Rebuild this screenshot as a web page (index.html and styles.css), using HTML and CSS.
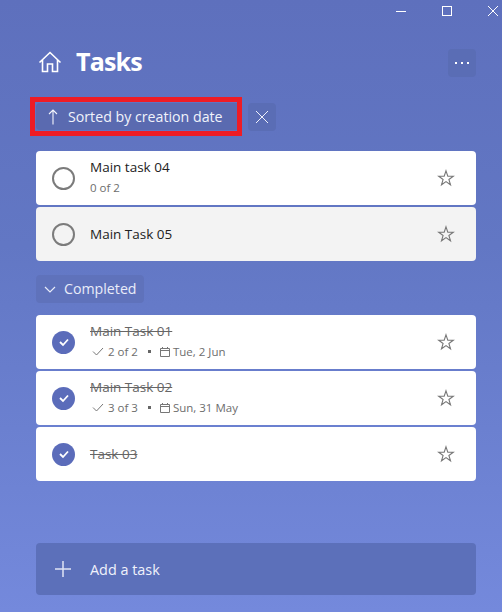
FILE: index.html
```html
<!DOCTYPE html>
<html lang="en">
<head>
<meta charset="utf-8">
<title>Tasks</title>
<link rel="stylesheet" href="styles.css">
</head>
<body>
<div class="app">
  <div class="titlebar">
    <svg class="win-icon" width="10" height="10" viewBox="0 0 10 10"><path d="M0 5.500H10"/></svg>
    <svg class="win-icon" width="10" height="10" viewBox="0 0 10 10"><rect x="0.5" y="0.5" width="9" height="9"/></svg>
    <svg class="win-icon" width="10" height="10" viewBox="0 0 10 10"><path d="M0 0L10 10M10 0L0 10"/></svg>
  </div>
  <header class="header">
    <svg class="home" width="24" height="22" viewBox="0 0 24 22"><path d="M1.500 11.500L12 1.500L22.500 11.500M4.500 9V20.500H9.500V13H14.500V20.500H19.500V9"/></svg>
    <h1 class="title">Tasks</h1>
    <button class="more"><svg width="14" height="2" viewBox="0 0 14 2"><path d="M0 0H2V2H0ZM6 0H8V2H6ZM12 0H14V2H12Z"/></svg></button>
  </header>
  <div class="sortbar">
    <div class="sort-outline">
      <div class="sort-chip">
        <svg class="arrow" width="10" height="16" viewBox="0 0 10 16"><path d="M5 15.500V1M1 5L5 1L9 5"/></svg>
        <span>Sorted by creation date</span>
      </div>
    </div>
    <button class="sort-close"><svg width="14" height="14" viewBox="0 0 14 14"><path d="M1 1L13 13M13 1L1 13"/></svg></button>
  </div>
  <ul class="list">
    <li class="task">
      <span class="circle"></span>
      <div class="body"><div class="name">Main task 04</div><div class="meta"><span>0 of 2</span></div></div>
      <svg class="star" width="18" height="18" viewBox="0 0 18 18"><path d="M9 1.800L10.800 7.200H16.300L11.900 10.500L13.500 15.800L9 12.600L4.500 15.800L6.100 10.500L1.700 7.200H7.200Z"/></svg>
    </li>
    <li class="task hover">
      <span class="circle"></span>
      <div class="body"><div class="name">Main Task 05</div></div>
      <svg class="star" width="18" height="18" viewBox="0 0 18 18"><path d="M9 1.800L10.800 7.200H16.300L11.900 10.500L13.500 15.800L9 12.600L4.500 15.800L6.100 10.500L1.700 7.200H7.200Z"/></svg>
    </li>
  </ul>
  <button class="completed">
    <svg width="12" height="7" viewBox="0 0 12 7"><path d="M1 1L6 6L11 1"/></svg>
    <span>Completed</span>
  </button>
  <ul class="list">
    <li class="task">
      <span class="check"><svg width="12" height="10" viewBox="0 0 12 10"><path d="M2 5L5 8L10 2.500"/></svg></span>
      <div class="body"><div class="name done">Main Task 01</div>
        <div class="meta">
          <svg class="tick" width="12" height="9" viewBox="0 0 12 9"><path d="M1 4.500L4.500 8L11 1"/></svg><span>2 of 2</span><i class="dot"></i>
          <svg class="cal" width="10" height="10" viewBox="0 0 10 10"><path d="M.5 1.500H9.500V9.500H.5ZM.5 3.500H9.500M2.500 0V2M7.500 0V2"/></svg><span>Tue, 2 Jun</span>
        </div></div>
      <svg class="star" width="18" height="18" viewBox="0 0 18 18"><path d="M9 1.800L10.800 7.200H16.300L11.900 10.500L13.500 15.800L9 12.600L4.500 15.800L6.100 10.500L1.700 7.200H7.200Z"/></svg>
    </li>
    <li class="task">
      <span class="check"><svg width="12" height="10" viewBox="0 0 12 10"><path d="M2 5L5 8L10 2.500"/></svg></span>
      <div class="body"><div class="name done">Main Task 02</div>
        <div class="meta">
          <svg class="tick" width="12" height="9" viewBox="0 0 12 9"><path d="M1 4.500L4.500 8L11 1"/></svg><span>3 of 3</span><i class="dot"></i>
          <svg class="cal" width="10" height="10" viewBox="0 0 10 10"><path d="M.5 1.500H9.500V9.500H.5ZM.5 3.500H9.500M2.500 0V2M7.500 0V2"/></svg><span>Sun, 31 May</span>
        </div></div>
      <svg class="star" width="18" height="18" viewBox="0 0 18 18"><path d="M9 1.800L10.800 7.200H16.300L11.900 10.500L13.500 15.800L9 12.600L4.500 15.800L6.100 10.500L1.700 7.200H7.200Z"/></svg>
    </li>
    <li class="task">
      <span class="check"><svg width="12" height="10" viewBox="0 0 12 10"><path d="M2 5L5 8L10 2.500"/></svg></span>
      <div class="body"><div class="name done">Task 03</div></div>
      <svg class="star" width="18" height="18" viewBox="0 0 18 18"><path d="M9 1.800L10.800 7.200H16.300L11.900 10.500L13.500 15.800L9 12.600L4.500 15.800L6.100 10.500L1.700 7.200H7.200Z"/></svg>
    </li>
  </ul>
  <div class="spacer"></div>
  <div class="add">
    <svg width="18" height="18" viewBox="0 0 18 18"><path d="M9 1V17M1 9H17"/></svg>
    <span>Add a task</span>
  </div>
</div>
</body>
</html>
```
FILE: styles.css
```css
* { box-sizing: border-box; }
html, body { margin: 0; height: 100%; }
body { font-family: "Open Sans", "Noto Sans", "Liberation Sans", sans-serif; overflow: hidden; }
button { font: inherit; border: 0; padding: 0; }
ul { list-style: none; margin: 0; padding: 0; }
svg { display: block; fill: none; flex: none; }

.app {
  width: 502px; height: 612px;
  padding: 0 26px 17px 36px;
  display: flex; flex-direction: column;
  background: linear-gradient(180deg, #5e70bd 0%, #6277c4 40%, #7489dc 100%);
  color: #fff;
}
.titlebar {
  height: 21px; margin-right: -26px; padding: 6px 4px 0 0;
  display: flex; justify-content: flex-end; gap: 36px;
}
.win-icon { stroke: #fff; stroke-width: 1; }

.header { height: 28px; margin-top: 28px; display: flex; align-items: center; }
.home { stroke: #fff; stroke-width: 1.6; margin: -2px 0 0 2px; }
.title { margin: -4px 0 0 14px; font-size: 25px; font-weight: 700; line-height: 28px; letter-spacing: -.8px; flex: 1; }
.more {
  width: 28px; height: 28px; border-radius: 4px;
  background: #5a6db5; display: flex; align-items: center; justify-content: center;
}
.more svg { fill: #fff; }

.sortbar { display: flex; align-items: center; margin: 20px 0 15px -6px; height: 39px; }
.sort-outline { border: 5px solid #ee1c25; width: 212px; height: 39px; padding: 1px 0 1px 1px; }
.sort-chip {
  height: 27px; display: flex; align-items: center; gap: 10px; padding-left: 12px;
  background: #5a6ab0; border-radius: 4px 0 0 4px; font-size: 14.2px; color: #f1f3fb;
}
.sort-chip span { margin-top: -1px; }
.arrow { stroke: #f4f5fc; stroke-width: 1.1; }
.sort-close {
  width: 28px; height: 28px; margin-left: 6px; border-radius: 4px;
  background: #5a6db5; display: flex; align-items: center; justify-content: center;
}
.sort-close svg { stroke: #eef0fa; stroke-width: 1; }

.list { display: flex; flex-direction: column; gap: 2px; width: 440px; }
.task {
  height: 54px; background: #fff; border-radius: 4px; color: #222;
  display: flex; align-items: center; padding: 0 21px 0 16px;
}
.task.hover { background: #f3f3f3; }
.circle { width: 23px; height: 23px; border: 2px solid #7b7b7b; border-radius: 50%; flex: none; }
.check {
  width: 23px; height: 23px; border-radius: 50%; background: #5b6cba; flex: none;
  display: flex; align-items: center; justify-content: center;
}
.check svg { stroke: #fff; stroke-width: 1.8; }
.body { flex: 1; margin-left: 15px; min-width: 0; }
.name { font-size: 13.5px; line-height: 19px; color: #222; }
.name.done { color: #666; text-decoration: line-through; }
.meta {
  display: flex; align-items: center; font-size: 11.5px; line-height: 16px; color: #6d6d6d;
  margin-top: 3px; margin-bottom: 3px;
}
.tick { stroke: #777; stroke-width: 1; margin: 0 4px 0 2px; }
.dot { width: 3px; height: 3px; background: #666; margin: 0 9px 0 10px; }
.cal { stroke: #777; stroke-width: 1; margin-right: 3px; }
.star { stroke: #777; stroke-width: 1.1; }

.completed {
  width: 108px; height: 28px; margin: 14px 0 12px; border-radius: 4px;
  background: #5f72bb; color: #e9ecf9; font-size: 14.2px;
  display: flex; align-items: center; gap: 8px; padding-left: 8px;
}
.completed span { margin-top: -1px; }
.completed svg { stroke: #e9ecf9; stroke-width: 1.2; }

.spacer { flex: 1; }
.add {
  width: 440px; height: 52px; border-radius: 4px; background: #5c70ba;
  display: flex; align-items: center; padding-left: 18px; gap: 18px;
  font-size: 14.4px; color: #f0f2fb;
}
.add svg { stroke: #dfe3f5; stroke-width: 1.5; }
```
